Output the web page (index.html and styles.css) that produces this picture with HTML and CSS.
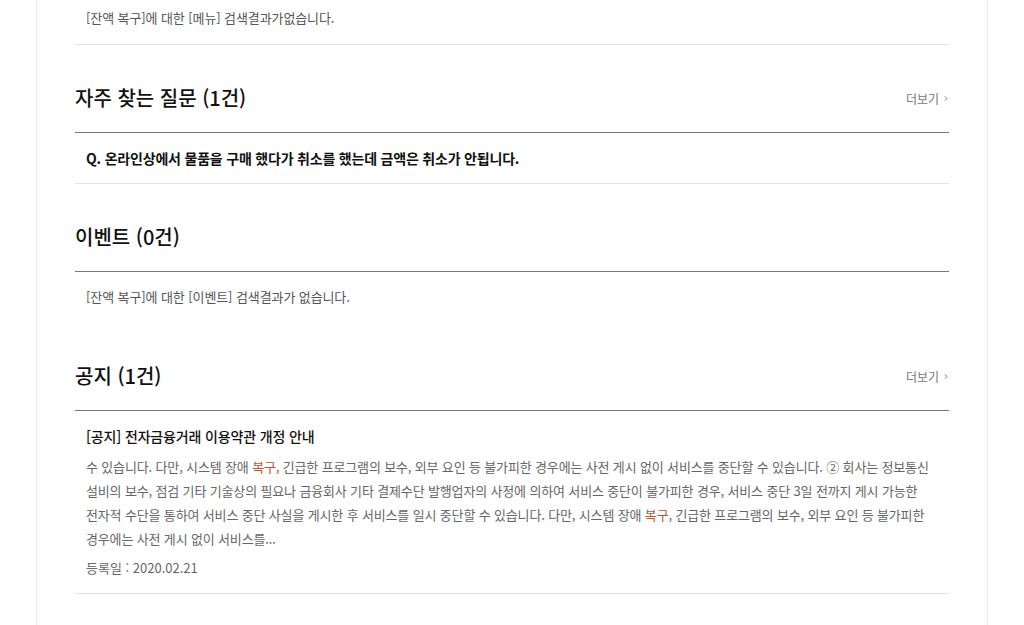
FILE: index.html
```html
<!DOCTYPE html>
<html lang="ko">
<head>
<meta charset="utf-8">
<title>통합검색 결과</title>
<link rel="stylesheet" href="styles.css">
</head>
<body>
<div class="wrap">
  <div class="content">
    <p class="empty empty-top">[잔액 복구]에 대한 [메뉴] 검색결과가없습니다.</p>

    <section class="sec">
      <div class="sec-head">
        <h2 class="sec-title">자주 찾는 질문 (1건)</h2>
        <a class="more" href="#">더보기 <svg class="more-ico" width="4" height="5" viewBox="0 0 4 5"><path d="M1 0.5 L3 2.5 L1 4.5" fill="none" stroke="#777" stroke-width="1"/></svg></a>
      </div>
      <ul class="list">
        <li class="faq">Q. 온라인상에서 물품을 구매 했다가 취소를 했는데 금액은 취소가 안됩니다.</li>
      </ul>
    </section>

    <section class="sec">
      <div class="sec-head">
        <h2 class="sec-title">이벤트 (0건)</h2>
      </div>
      <p class="empty">[잔액 복구]에 대한 [이벤트] 검색결과가 없습니다.</p>
    </section>

    <section class="sec">
      <div class="sec-head">
        <h2 class="sec-title">공지 (1건)</h2>
        <a class="more" href="#">더보기 <svg class="more-ico" width="4" height="5" viewBox="0 0 4 5"><path d="M1 0.5 L3 2.5 L1 4.5" fill="none" stroke="#777" stroke-width="1"/></svg></a>
      </div>
      <ul class="list">
        <li class="notice">
          <p class="notice-title">[공지] 전자금융거래 이용약관 개정 안내</p>
          <p class="notice-body">수 있습니다. 다만, 시스템 장애 <em class="hl">복구</em>, 긴급한 프로그램의 보수, 외부 요인 등 불가피한 경우에는 사전 게시 없이 서비스를 중단할 수 있습니다. ② 회사는 정보통신 설비의 보수, 점검 기타 기술상의 필요나 금융회사 기타 결제수단 발행업자의 사정에 의하여 서비스 중단이 불가피한 경우, 서비스 중단 3일 전까지 게시 가능한 전자적 수단을 통하여 서비스 중단 사실을 게시한 후 서비스를 일시 중단할 수 있습니다. 다만, 시스템 장애 <em class="hl">복구</em>, 긴급한 프로그램의 보수, 외부 요인 등 불가피한 경우에는 사전 게시 없이 서비스를...</p>
          <p class="notice-date">등록일 : 2020.02.21</p>
        </li>
      </ul>
    </section>
  </div>
</div>
</body>
</html>
```

FILE: styles.css
```css
* { box-sizing: border-box; }
html, body { margin: 0; padding: 0; background: #fff; }
body {
  font-family: "Noto Sans CJK KR", "Noto Sans", sans-serif;
  color: #222;
  word-break: keep-all;
}
.wrap {
  width: 952px;
  margin-left: 36px;
  min-height: 625px;
  border-left: 1px solid #ebebeb;
  border-right: 1px solid #ebebeb;
}
.content {
  padding: 0 38px;
}
p { margin: 0; }
ul { margin: 0; padding: 0; list-style: none; }

.empty {
  padding: 14px 11px 15px;
  font-size: 13px;
  line-height: 22px;
  color: #555;
  letter-spacing: -0.1px;
}
.empty-top {
  padding-top: 7px;
  border-bottom: 1px solid #e3e3e3;
}

.sec-head {
  display: flex;
  align-items: center;
  justify-content: space-between;
  padding: 38px 0 19px;
  border-bottom: 1px solid #7a7a7a;
}
.sec-title {
  margin: 0;
  font-size: 20px;
  line-height: 30px;
  font-weight: 500;
  color: #111;
}
.more {
  display: flex;
  align-items: center;
  gap: 5px;
  font-size: 12px;
  color: #777;
  text-decoration: none;
  margin-right: 1px;
}
.more-ico { display: block; }

.faq {
  padding: 14px 11px;
  font-size: 14px;
  line-height: 22px;
  font-weight: 700;
  color: #111;
  letter-spacing: -0.2px;
  border-bottom: 1px solid #e3e3e3;
}

.notice {
  padding: 14px 11px;
  border-bottom: 1px solid #e3e3e3;
}
.notice-title {
  font-size: 14px;
  line-height: 22px;
  font-weight: 500;
  color: #111;
  letter-spacing: -0.15px;
}
.notice-body {
  margin-top: 8px;
  font-size: 13px;
  line-height: 24px;
  color: #666;
  letter-spacing: -0.15px;
}
.hl { font-style: normal; color: #c0552d; }
.notice-date {
  margin-top: 6px;
  font-size: 13px;
  line-height: 22px;
  color: #666;
}
```
